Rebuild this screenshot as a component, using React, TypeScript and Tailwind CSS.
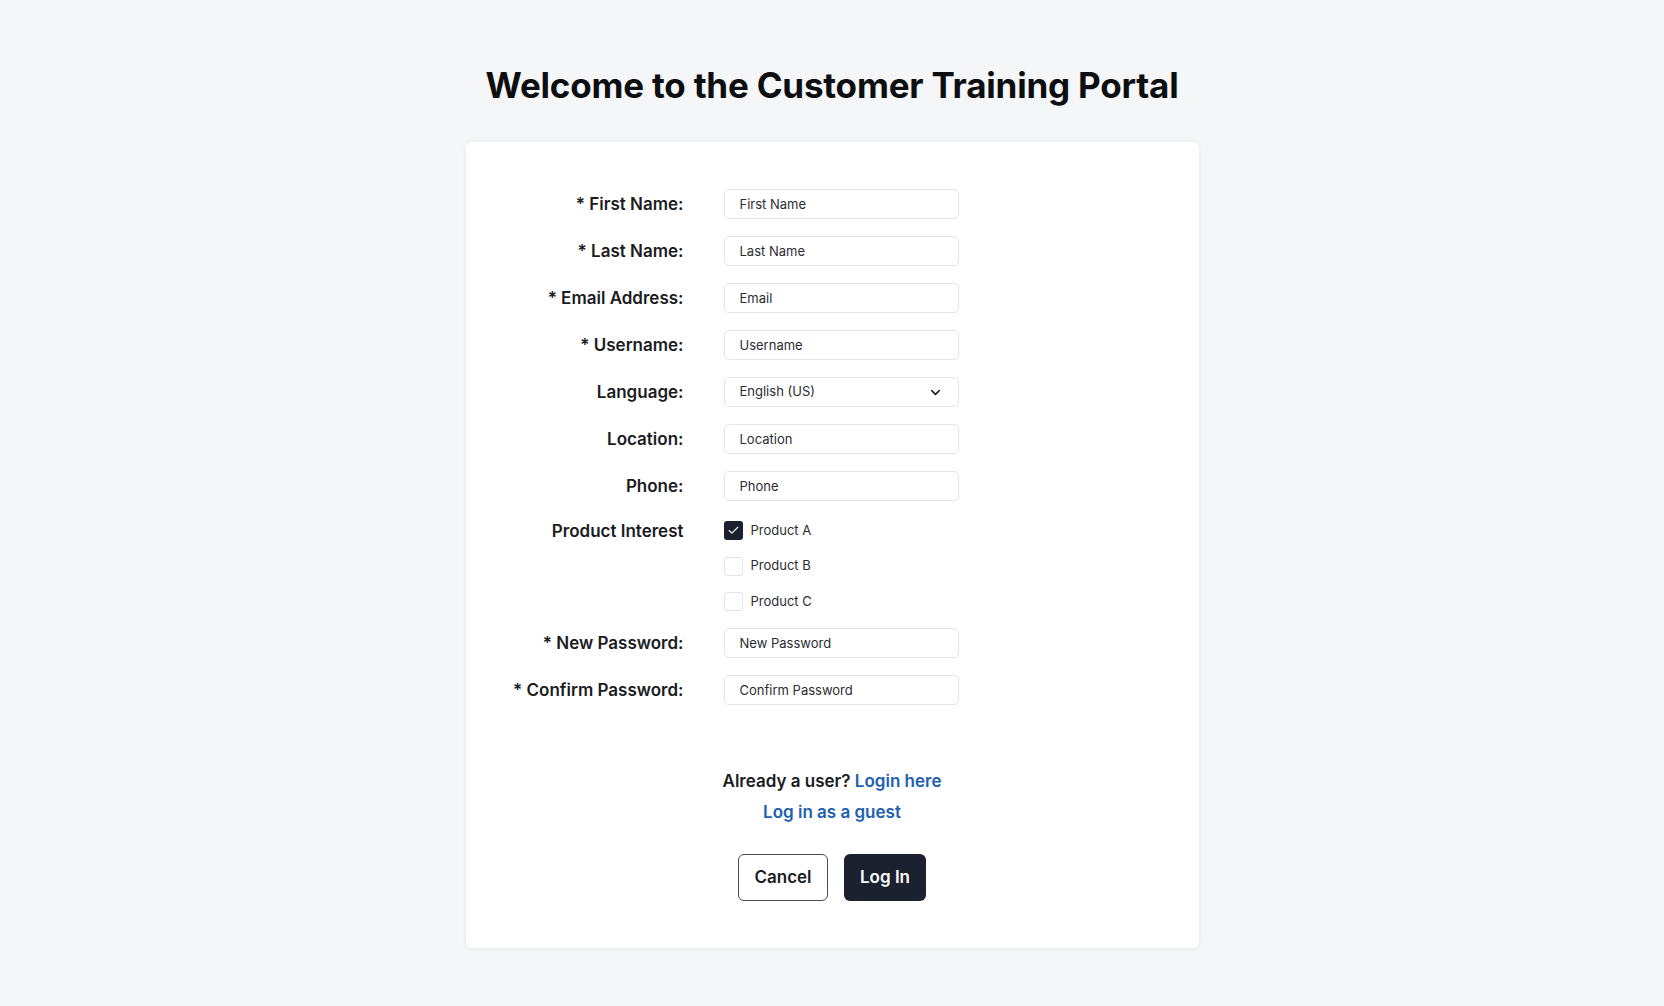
import React from 'react';
import { ChevronDown, Check } from 'lucide-react';

const font = { fontFamily: 'Inter, "Noto Sans", sans-serif' };

function Label({ text }: { text: string }) {
  return (
    <div className="flex h-[30px] items-center justify-end pt-[2px] text-[17px] font-semibold text-[#1b1c1f]">
      {text}
    </div>
  );
}

function TextField({ placeholder }: { placeholder: string }) {
  return (
    <input
      placeholder={placeholder}
      className="h-[30px] w-[235px] rounded-[5px] border border-[#e2e5e8] bg-white px-[15px] text-[13px] text-[#2b2d31] placeholder:text-[#2b2d31] outline-none"
    />
  );
}

function CheckRow({ label, checked }: { label: string; checked?: boolean }) {
  return (
    <label className="flex h-[19px] items-center gap-[8px] text-[13px] text-[#2b2d31]">
      {checked ? (
        <span className="flex h-[19px] w-[19px] items-center justify-center rounded-[3px] bg-[#1c2130]">
          <Check size={13} strokeWidth={2} className="text-white" />
        </span>
      ) : (
        <span className="h-[19px] w-[19px] rounded-[3px] border border-[#e2e5e8] bg-white" />
      )}
      {label}
    </label>
  );
}

export default function App() {
  return (
    <div className="min-h-screen bg-[#f4f6f7] pt-[65px] pb-[58px]" style={font}>
      <div className="flex flex-col items-center">
        <h1 className="text-[35px] font-bold leading-[41px] tracking-[-0.2px] text-[#0d0e10]">
          Welcome to the Customer Training Portal
        </h1>

        <div className="mt-[36px] w-[733px] rounded-[6px] bg-white pt-[47px] pb-[47px] shadow-[0_1px_5px_rgba(0,0,0,0.07)]">
          <div className="grid grid-cols-[218px_235px] gap-x-[40px] gap-y-[17px]">
            <Label text="* First Name:" />
            <TextField placeholder="First Name" />
            <Label text="* Last Name:" />
            <TextField placeholder="Last Name" />
            <Label text="* Email Address:" />
            <TextField placeholder="Email" />
            <Label text="* Username:" />
            <TextField placeholder="Username" />
            <Label text="Language:" />
            <div className="flex h-[30px] w-[235px] items-center justify-between rounded-[5px] border border-[#e2e5e8] bg-white pl-[15px] pr-[15px] text-[13px] text-[#2b2d31]">
              <span>English (US)</span>
              <ChevronDown size={15} strokeWidth={2.4} className="text-[#1b1c1f]" />
            </div>
            <Label text="Location:" />
            <TextField placeholder="Location" />
            <Label text="Phone:" />
            <TextField placeholder="Phone" />

            <div className="mt-[3px] flex h-[19px] items-center justify-end pt-[2px] text-[17px] font-semibold text-[#1b1c1f]">
              Product Interest
            </div>
            <div className="mt-[3px] flex flex-col gap-[16.5px]">
              <CheckRow label="Product A" checked />
              <CheckRow label="Product B" />
              <CheckRow label="Product C" />
            </div>

            <Label text="* New Password:" />
            <TextField placeholder="New Password" />
            <Label text="* Confirm Password:" />
            <TextField placeholder="Confirm Password" />
          </div>

          <div className="mt-[64px] flex flex-col items-center gap-[7px] text-[17px] font-semibold leading-[24px]">
            <p className="text-[#1b1c1f]">
              Already a user? <a className="text-[#2160ad]">Login here</a>
            </p>
            <a className="text-[#2160ad]">Log in as a guest</a>
          </div>

          <div className="mt-[30px] flex justify-center gap-[16px]">
            <button className="h-[47px] w-[90px] rounded-[6px] border border-[#4a4c52] bg-white text-[17px] font-semibold text-[#1b1c1f]">
              Cancel
            </button>
            <button className="h-[47px] w-[82px] rounded-[6px] bg-[#1c2130] text-[17px] font-semibold text-white">
              Log In
            </button>
          </div>
        </div>
      </div>
    </div>
  );
}
